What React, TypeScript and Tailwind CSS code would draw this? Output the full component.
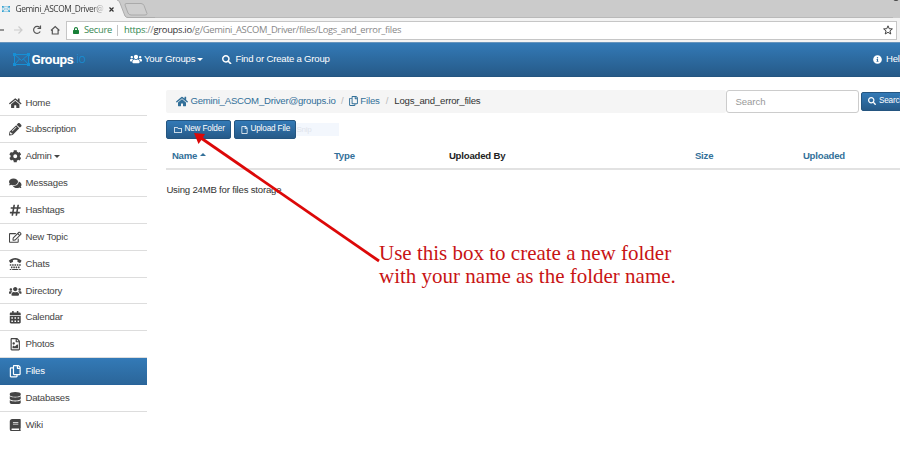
import type { ReactNode } from "react";
import type { IconType } from "react-icons";
import {
  FaBook, FaCalendarAlt, FaCog, FaComments, FaDatabase, FaHashtag, FaHome, FaInfoCircle, FaLock,
  FaPencilAlt, FaRegCopy, FaRegEdit, FaRegFile, FaRegFileImage, FaRegFolder, FaSearch, FaTty, FaUsers,
} from "react-icons/fa";

const items: { label: string; icon: IconType; caret?: boolean; active?: boolean }[] = [
  { label: "Home", icon: FaHome },
  { label: "Subscription", icon: FaPencilAlt },
  { label: "Admin", icon: FaCog, caret: true },
  { label: "Messages", icon: FaComments },
  { label: "Hashtags", icon: FaHashtag },
  { label: "New Topic", icon: FaRegEdit },
  { label: "Chats", icon: FaTty },
  { label: "Directory", icon: FaUsers },
  { label: "Calendar", icon: FaCalendarAlt },
  { label: "Photos", icon: FaRegFileImage },
  { label: "Files", icon: FaRegCopy, active: true },
  { label: "Databases", icon: FaDatabase },
  { label: "Wiki", icon: FaBook },
];

function Caret() {
  return <span className="ml-[2px] inline-block border-x-[3px] border-t-[3px] border-x-transparent border-t-current" />;
}

function Envelope({ className }: { className: string }) {
  return (
    <svg viewBox="0 0 17 13" className={className} fill="none" stroke="currentColor">
      <path d="M1.5 1.5h14v10h-14zM1.5 1.5l7 6 7-6M1.5 11.5l5-5.500M15.500 11.500l-5-5.500" />
      <path d="M0 0h3v3H0zM14 0h3v3h-3zM0 10h3v3H0zM14 10h3v3h-3z" fill="currentColor" stroke="none" />
    </svg>
  );
}

function BlueButton({ className, children }: { className: string; children: ReactNode }) {
  return (
    <button className={`flex shrink-0 items-center whitespace-nowrap rounded-[2px] border border-[#245580] bg-linear-to-b from-[#337ab7] to-[#265a88] text-[8.2px] tracking-[-0.150px] text-white ${className}`}>
      {children}
    </button>
  );
}

function Browser() {
  return (
    <header className="font-['Open_Sans','Noto_Sans',sans-serif]">
      <div className="flex h-[18px] overflow-hidden bg-[#cbcbcb]">
        <div className="relative flex w-[127px] shrink-0 items-center">
          <svg viewBox="0 0 155 18" className="absolute left-0 top-0 h-[18px] w-[155px]">
            <path d="M0 0H117Q119 0 120 3L125 16Q126 18 128 18H0Z" fill="#f3f3f3" />
            <path d="M117 0Q119 0 120 3L125 16Q126 17.500 128 17.500H155" fill="none" stroke="#adadad" />
            <path d="M126 3.500h15q2 0 3 2l3 8q0 1.500-2 1.500h-14q-2 0-3-2l-3-8q0-1.500 1-1.500z" fill="#cfcfcf" stroke="#aaa" />
          </svg>
          <Envelope className="relative ml-[2px] h-[6px] w-[8px] text-[#249bd0]" />
          <span className="relative ml-[5.500px] w-[88px] whitespace-nowrap bg-linear-to-r from-[#333] from-86% to-[#ddd] bg-clip-text text-[8.4px] tracking-[-0.400px] text-transparent">Gemini_ASCOM_Driver@</span>
          <svg viewBox="0 0 5 5" className="relative ml-[5px] h-[5px] w-[5px] shrink-0" stroke="#333" strokeWidth="1.2"><path d="M.5.5l4 4M4.500.5l-4 4" /></svg>
        </div>
        <div className="flex-1 border-b border-[#b9b9b9]" />
        <span className="mr-[1px] -mt-[4px] h-[5px] w-[6px] rounded-b-full bg-[#444]" />
      </div>
      <div className="flex h-[24px] items-center bg-[#f3f3f3] pr-[3px]">
        <svg viewBox="0 0 66 24" className="h-[24px] w-[66px] shrink-0" fill="none" stroke="#555" strokeWidth="1.200">
          <path d="M0 12h4" />
          <path d="M14 12h8M18.500 8.500l3.500 3.500-3.500 3.500" stroke="#ccc" />
          <path d="M39.700 9.500a3.500 3.500 0 1 0 .5 4M40.500 7.500v3h-3" />
          <path d="M51 12.500l4.200-4 4.200 4M52.300 12v4h5.800v-4" />
        </svg>
        <div className="flex h-[19px] flex-1 items-center whitespace-nowrap border border-[#c6c6c6] bg-white text-[9.4px] tracking-[-0.310px]">
          <FaLock className="ml-[6px] h-[7px] w-[6px] text-[#188038]" />
          <span className="ml-[5px] w-[27px] text-[#3c8a56]">Secure</span>
          <span className="ml-[6px] mr-[6px] h-[11px] w-px bg-[#c4c4c4]" />
          <span className="text-[#888]"><span className="text-[#2f8750]">https</span>://<span className="text-[#333]">groups.io</span>/g/Gemini_ASCOM_Driver/files/Logs_and_error_files</span>
          <svg viewBox="0 0 10 10" className="ml-auto mr-[3px] h-[10px] w-[10px]" fill="none" stroke="#444"><path d="M5 .8l1.200 2.900 3.200.2-2.500 2 .9 3.100L5 7.300 2.200 9l.9-3.100-2.500-2 3.200-.2z" /></svg>
        </div>
      </div>
    </header>
  );
}

function Sidebar() {
  return (
    <aside className="w-[147px] shrink-0 pt-[12.600px]">
      {items.map(({ label, icon: Icon, caret, active }) => (
        <div key={label} className={`flex h-[26.860px] items-center border-b pl-[8px] pt-[0.500px] ${active ? "border-[#28639a] bg-linear-to-b from-[#337ab7] to-[#2b669a] text-white" : label === "Wiki" ? "border-transparent text-[#444]" : "border-[#ddd] text-[#444]"}`}>
          <span className="flex w-[15px] justify-center"><Icon className="h-[12.500px] w-auto max-w-[14px]" /></span>
          <span className="ml-[2.500px]">{label}</span>
          {caret && <Caret />}
        </div>
      ))}
    </aside>
  );
}

export default function App() {
  return (
    <div className="relative h-[451px] w-[900px] overflow-hidden bg-white font-['Liberation_Sans',Arial,sans-serif] text-[9.600px] tracking-[-0.200px] text-[#333]">
      <Browser />
      <nav className="flex h-[35px] items-center overflow-hidden whitespace-nowrap border-y border-t-[#6694bd] border-b-[#245580] bg-linear-to-b from-[#337ab7] to-[#265a88] text-white">
        <div className="flex w-[130px] shrink-0 items-center pl-[13px]">
          <Envelope className="h-[13px] w-[17px] text-[#168fd5]" />
          <span className="ml-[1.500px] font-['Roboto',sans-serif] text-[13.500px] font-bold tracking-[-0.300px]">Groups</span>
          <span className="font-['Roboto',sans-serif] text-[12.500px] font-light text-[#168fd5]">.io</span>
        </div>
        <div className="flex w-[92px] shrink-0 items-center"><FaUsers className="mr-[2px] h-[10px] w-[12px]" />Your Groups<Caret /></div>
        <div className="flex items-center"><FaSearch className="mr-[4px] h-[9.500px] w-[9.500px]" />Find or Create a Group</div>
        <div className="ml-auto flex w-[27px] items-center"><FaInfoCircle className="mr-[4px] h-[9px] w-[9px] shrink-0" />Help</div>
      </nav>
      <div className="flex">
        <Sidebar />
        <main className="ml-[19.400px] w-[733.600px] shrink-0 overflow-hidden pt-[12px]">
          <div className="flex h-[24px] items-center whitespace-nowrap">
            <div className="flex h-[23px] w-[560px] shrink-0 items-center rounded-[2px] bg-[#f5f5f5] pl-[10px] text-[#337099]">
              <FaHome className="mr-[2px] h-[11px] w-[12px]" /><span className="w-[144.500px]">Gemini_ASCOM_Driver@groups.io</span>
              <span className="mx-[6px] text-[#bbb]">/</span>
              <FaRegCopy className="mr-[2px] h-[10px] w-[9px]" /><span className="w-[19.500px]">Files</span>
              <span className="mx-[6px] text-[#bbb]">/</span>
              <span className="text-[#333]">Logs_and_error_files</span>
            </div>
            <input placeholder="Search" className="h-[23px] w-[133px] shrink-0 rounded-[3px] border border-[#ccc] px-[8px] text-[9.600px] tracking-[-0.050px] placeholder:text-[#999]" />
            <BlueButton className="ml-[1.500px] h-[19px] w-[50px] pl-[6px]"><FaSearch className="mr-[3px] h-[8px] w-[8px] shrink-0" />Search</BlueButton>
          </div>
          <div className="mt-[7px] flex h-[19px] items-center">
            <BlueButton className="h-[19px] w-[65px] pl-[7px]"><FaRegFolder className="mr-[2px] h-[8px] w-[8px]" />New Folder</BlueButton>
            <BlueButton className="ml-[3px] h-[19px] w-[62px] pl-[6px]"><FaRegFile className="mr-[2px] h-[8px] w-[7px]" />Upload File</BlueButton>
            <span className="flex h-[13px] w-[43px] items-center bg-[#f3f7fd] text-[8px] text-[#dfe4ec]">Snip</span>
          </div>
          <div className="flex h-[31px] items-center border-b-2 border-[#e2e2e2] pl-[5.500px] pt-[6px] font-bold text-[#337099]">
            <span className="flex w-[162px] items-center">Name<span className="mb-[4px] ml-[3px] border-x-[3px] border-b-[3px] border-x-transparent border-b-current" /></span>
            <span className="w-[115px]">Type</span>
            <span className="w-[246px] text-[#222]">Uploaded By</span>
            <span className="w-[108px]">Size</span>
            <span>Uploaded</span>
          </div>
          <p className="mt-[13px]">Using 24MB for files storage</p>
        </main>
      </div>
      <svg viewBox="0 0 900 451" className="pointer-events-none absolute left-0 top-0 h-[451px] w-[900px]">
        <path d="M201 138L379 261" stroke="#dc0808" strokeWidth="2.800" />
        <path d="M194 133l11 1-2.500 4.500-4 5.500z" fill="#dc0808" />
      </svg>
      <p className="absolute left-[379px] top-[242px] whitespace-nowrap font-['Liberation_Serif',serif] text-[21px] leading-[23px] tracking-normal text-[#c81414]">
        Use this box to create a new folder<br />with your name as the folder name.
      </p>
    </div>
  );
}
